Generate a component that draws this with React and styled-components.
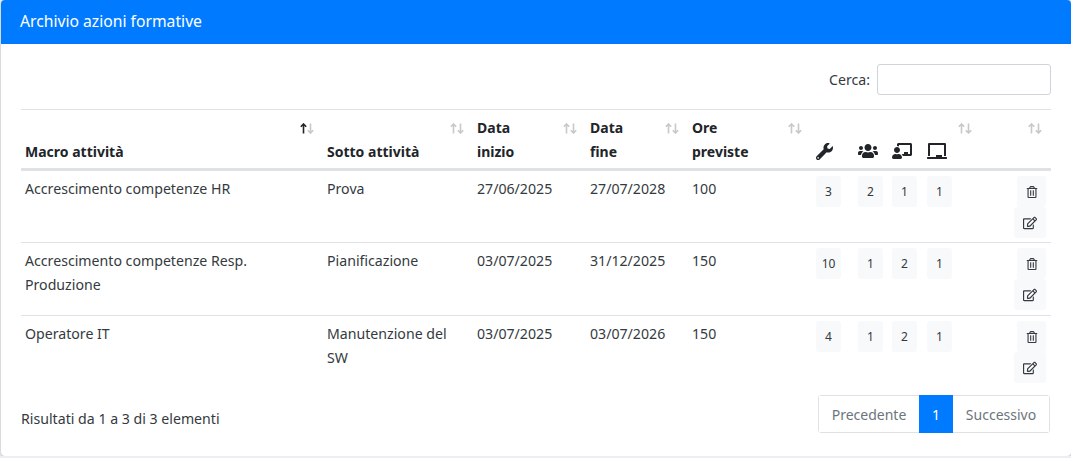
import styled, { createGlobalStyle } from "styled-components";
import {
  FaWrench,
  FaUsers,
  FaChalkboardTeacher,
  FaChalkboard,
  FaRegTrashAlt,
  FaRegEdit,
} from "react-icons/fa";

const GlobalStyle = createGlobalStyle`
  body {
    margin: 0;
    background: #eceef1;
    font-family: "Noto Sans", "Liberation Sans", sans-serif;
    font-size: 14.15px;
    color: #343a40;
  }
`;

const Card = styled.div`
  margin-left: 1px;
  height: 456px;
  background: #fff;
  border-radius: 4px;
  box-shadow: 0 0 1px rgba(0, 0, 0, 0.125), 0 1px 3px rgba(0, 0, 0, 0.2);
  overflow: hidden;
`;

const CardHeader = styled.div`
  height: 44px;
  box-sizing: border-box;
  padding: 9px 19px;
  background: #007bff;
  color: #fff;
  font-size: 15.7px;
  line-height: 24px;
`;

const CardBody = styled.div`
  padding: 20px;
`;

const SearchRow = styled.div`
  display: flex;
  justify-content: flex-end;
  align-items: center;
  gap: 7px;
  height: 31px;
  margin-bottom: 14px;
`;

const SearchInput = styled.input`
  width: 174px;
  height: 31px;
  box-sizing: border-box;
  border: 1px solid #ced4da;
  border-radius: 3px;
  background: #fff;
`;

const Table = styled.table`
  width: 1030px;
  table-layout: fixed;
  border-collapse: collapse;
  line-height: 24px;
`;

const Th = styled.th`
  position: relative;
  padding: 6px 4px 4px;
  border-top: 1px solid #dee2e6;
  border-bottom: 3px solid #dee2e6;
  text-align: left;
  vertical-align: bottom;
  font-size: 14px;
  font-weight: 700;
  color: #212529;
`;

const Td = styled.td`
  padding: ${(props) => (props.$first ? "6px 5px 4px 4px" : "6px 5px 5px 4px")};
  border-top: ${(props) => (props.$first ? "none" : "1px solid #dee2e6")};
  vertical-align: top;
`;

const SortIcon = styled.svg`
  position: absolute;
  top: 13px;
  right: 9px;
  width: 14px;
  height: 11px;
  fill: none;
  stroke-width: 1.6;
`;

const ResourceHeads = styled.div`
  display: flex;
  align-items: center;
  height: 24px;
  margin: -1px 0 1px 1px;
`;

const ResourceHead = styled.span`
  display: flex;
  width: ${(props) => props.$width}px;
`;

const Counts = styled.div`
  display: flex;
  margin: -1px 0 0 1px;
`;

const Count = styled.span`
  width: 25px;
  height: 31px;
  margin-right: ${(props) => props.$gap}px;
  display: flex;
  align-items: center;
  justify-content: center;
  background: #f8f9fa;
  border-radius: 3px;
  font-size: 12px;
`;

const Actions = styled.div`
  display: flex;
  flex-direction: column;
  align-items: flex-end;
  margin-top: -1px;
`;

const ActionButton = styled.span`
  width: ${(props) => props.$width}px;
  height: 31px;
  display: flex;
  align-items: center;
  justify-content: center;
  background: #f8f9fa;
  border-radius: 3px;
`;

const Footer = styled.div`
  display: flex;
  justify-content: space-between;
  align-items: flex-start;
  margin-top: 7px;
  padding-right: 1px;
`;

const Summary = styled.span`
  padding-top: 14px;
`;

const Pager = styled.div`
  display: flex;
  height: 38px;
  box-sizing: border-box;
  border: 1px solid #dee2e6;
  border-radius: 3px;
  font-size: 14px;
`;

const PageItem = styled.span`
  width: ${(props) => props.$width}px;
  display: flex;
  align-items: center;
  justify-content: center;
  margin: ${(props) => (props.$active ? "-1px 0" : "0")};
  background: ${(props) => (props.$active ? "#007bff" : "#fff")};
  color: ${(props) => (props.$active ? "#fff" : "#6c757d")};
`;

const rows = [
  {
    macro: "Accrescimento competenze HR",
    sub: "Prova",
    start: "27/06/2025",
    end: "27/07/2028",
    hours: 100,
    counts: [3, 2, 1, 1],
  },
  {
    macro: "Accrescimento competenze Resp. Produzione",
    sub: "Pianificazione",
    start: "03/07/2025",
    end: "31/12/2025",
    hours: 150,
    counts: [10, 1, 2, 1],
  },
  {
    macro: "Operatore IT",
    sub: "Manutenzione del SW",
    start: "03/07/2025",
    end: "03/07/2026",
    hours: 150,
    counts: [4, 1, 2, 1],
  },
];

const countGaps = [17, 9, 10, 0];

function Sort({ active }) {
  return (
    <SortIcon viewBox="0 0 14 11">
      <path d="M3.5 10.5V1M0.8 3.8L3.5 1L6.2 3.8" stroke={active ? "#212529" : "#c6c8ca"} />
      <path d="M10.5 0.5V10M7.8 7.2L10.5 10L13.2 7.2" stroke="#c6c8ca" />
    </SortIcon>
  );
}

export default function App() {
  return (
    <>
      <GlobalStyle />
      <Card>
        <CardHeader>Archivio azioni formative</CardHeader>
        <CardBody>
          <SearchRow>
            <span>Cerca:</span>
            <SearchInput type="search" />
          </SearchRow>
          <Table>
            <colgroup>
              <col style={{ width: 302 }} />
              <col style={{ width: 150 }} />
              <col style={{ width: 113 }} />
              <col style={{ width: 102 }} />
              <col style={{ width: 123 }} />
              <col style={{ width: 170 }} />
              <col style={{ width: 70 }} />
            </colgroup>
            <thead>
              <tr>
                <Th>
                  Macro attività
                  <Sort active />
                </Th>
                <Th>
                  Sotto attività
                  <Sort />
                </Th>
                <Th>
                  Data
                  <br />
                  inizio
                  <Sort />
                </Th>
                <Th>
                  Data
                  <br />
                  fine
                  <Sort />
                </Th>
                <Th>
                  Ore
                  <br />
                  previste
                  <Sort />
                </Th>
                <Th>
                  <ResourceHeads>
                    <ResourceHead $width={42}><FaWrench size={17} /></ResourceHead>
                    <ResourceHead $width={34}><FaUsers size={20} /></ResourceHead>
                    <ResourceHead $width={35}><FaChalkboardTeacher size={20} /></ResourceHead>
                    <ResourceHead $width={30}><FaChalkboard size={20} /></ResourceHead>
                  </ResourceHeads>
                  <Sort />
                </Th>
                <Th>
                  <Sort />
                </Th>
              </tr>
            </thead>
            <tbody>
              {rows.map((row, i) => (
                <tr key={row.macro}>
                  <Td $first={i === 0}>{row.macro}</Td>
                  <Td $first={i === 0}>{row.sub}</Td>
                  <Td $first={i === 0}>{row.start}</Td>
                  <Td $first={i === 0}>{row.end}</Td>
                  <Td $first={i === 0}>{row.hours}</Td>
                  <Td $first={i === 0}>
                    <Counts>
                      {row.counts.map((count, j) => (
                        <Count key={j} $gap={countGaps[j]}>{count}</Count>
                      ))}
                    </Counts>
                  </Td>
                  <Td $first={i === 0}>
                    <Actions>
                      <ActionButton $width={29}><FaRegTrashAlt size={12} /></ActionButton>
                      <ActionButton $width={32}><FaRegEdit size={14} /></ActionButton>
                    </Actions>
                  </Td>
                </tr>
              ))}
            </tbody>
          </Table>
          <Footer>
            <Summary>Risultati da 1 a 3 di 3 elementi</Summary>
            <Pager>
              <PageItem $width={100}>Precedente</PageItem>
              <PageItem $width={34} $active>1</PageItem>
              <PageItem $width={96}>Successivo</PageItem>
            </Pager>
          </Footer>
        </CardBody>
      </Card>
    </>
  );
}
